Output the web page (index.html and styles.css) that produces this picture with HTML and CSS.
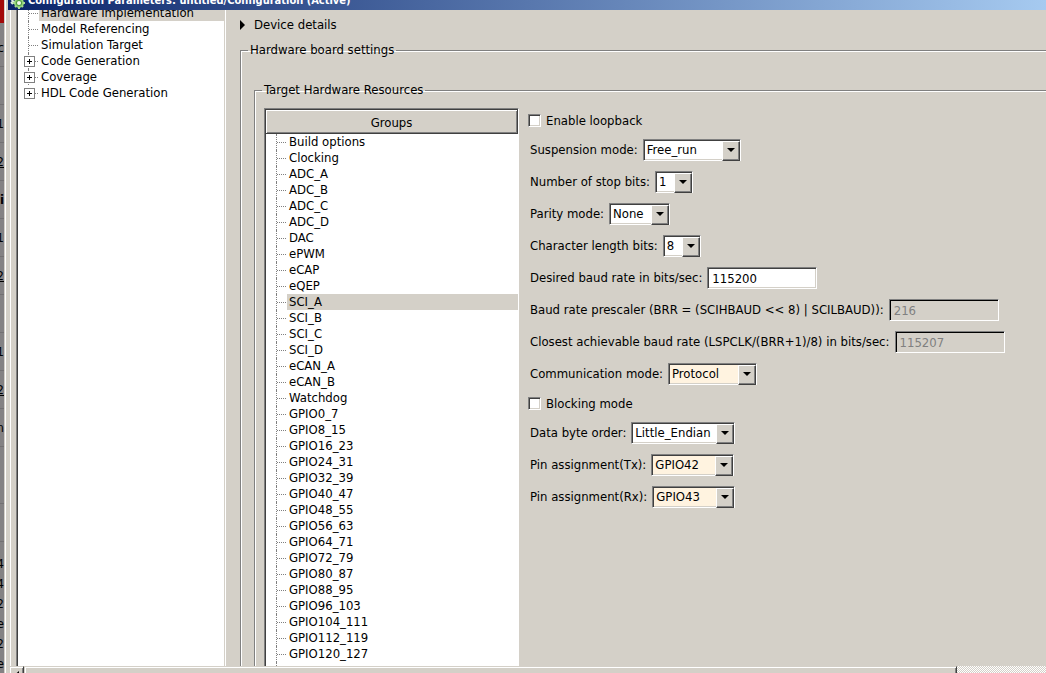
FILE: index.html
```html
<!DOCTYPE html>
<html lang="en">
<head>
    <meta charset="UTF-8">
    <meta name="viewport" content="width=device-width, initial-scale=1.0">
    <title>Configuration Parameters: untitled/Configuration (Active)</title>
    <link rel="stylesheet" href="styles.css">
</head>
<body>
    <!-- Sliver of the window behind the dialog -->
    <div class="behind">
        <div class="behind-red"></div>
        <div class="behind-row">c</div>
        <div class="behind-row"></div>
        <div class="behind-row">1</div>
        <div class="behind-row link">2</div>
        <div class="behind-row bold">i</div>
        <div class="behind-row">1</div>
        <div class="behind-row link">2</div>
        <div class="behind-row"></div>
        <div class="behind-row">1</div>
        <div class="behind-row link">2</div>
        <div class="behind-row">n</div>
        <div class="behind-row tall"></div>
        <div class="behind-row"></div>
        <div class="behind-lines">
            <span>4</span>
            <span>4</span>
            <span>2</span>
            <span>e</span>
            <span>2</span>
            <span>e</span>
        </div>
    </div>

    <div class="window">
        <header class="titlebar">
            <svg class="app-icon" width="16" height="16" viewBox="0 0 16 16">
                <circle cx="5" cy="6" r="3" fill="none" stroke="#dfeedd" stroke-width="2"/>
                <path d="M1 9l2 2M2 5l-2 1" stroke="#dfeedd" stroke-width="2"/>
                <circle cx="9" cy="10" r="4" fill="#4f9a3f" stroke="#8fcf76" stroke-width="2"/>
                <path d="M9 4v2M9 14v2M3 10h2M13 10h2M5 6l1 1M12 13l1 1M13 6l-1 1M5 14l1-1" stroke="#a9dc92" stroke-width="2"/>
                <circle cx="9" cy="10" r="2" fill="#f2f9ee"/>
            </svg>
            <span>Configuration Parameters: untitled/Configuration (Active)</span>
        </header>

        <div class="content">
            <nav class="sidebar">
                <ul class="tree">
                    <li class="selected"><span>Hardware Implementation</span></li>
                    <li><span>Model Referencing</span></li>
                    <li><span>Simulation Target</span></li>
                    <li class="parent"><span>Code Generation</span></li>
                    <li class="parent"><span>Coverage</span></li>
                    <li class="parent last"><span>HDL Code Generation</span></li>
                </ul>
            </nav>

            <main class="settings">
                <button class="disclosure" type="button">
                    <svg width="5" height="10" viewBox="0 0 5 10"><path d="M0 0l5 5-5 5z"/></svg>
                    Device details
                </button>

                <fieldset class="board">
                    <legend>Hardware board settings</legend>
                    <fieldset class="resources">
                        <legend>Target Hardware Resources</legend>

                        <div class="groups">
                            <div class="groups-header">Groups</div>
                            <ul class="tree">
                                <li><span>Build options</span></li>
                                <li><span>Clocking</span></li>
                                <li><span>ADC_A</span></li>
                                <li><span>ADC_B</span></li>
                                <li><span>ADC_C</span></li>
                                <li><span>ADC_D</span></li>
                                <li><span>DAC</span></li>
                                <li><span>ePWM</span></li>
                                <li><span>eCAP</span></li>
                                <li><span>eQEP</span></li>
                                <li class="selected"><span>SCI_A</span></li>
                                <li><span>SCI_B</span></li>
                                <li><span>SCI_C</span></li>
                                <li><span>SCI_D</span></li>
                                <li><span>eCAN_A</span></li>
                                <li><span>eCAN_B</span></li>
                                <li><span>Watchdog</span></li>
                                <li><span>GPIO0_7</span></li>
                                <li><span>GPIO8_15</span></li>
                                <li><span>GPIO16_23</span></li>
                                <li><span>GPIO24_31</span></li>
                                <li><span>GPIO32_39</span></li>
                                <li><span>GPIO40_47</span></li>
                                <li><span>GPIO48_55</span></li>
                                <li><span>GPIO56_63</span></li>
                                <li><span>GPIO64_71</span></li>
                                <li><span>GPIO72_79</span></li>
                                <li><span>GPIO80_87</span></li>
                                <li><span>GPIO88_95</span></li>
                                <li><span>GPIO96_103</span></li>
                                <li><span>GPIO104_111</span></li>
                                <li><span>GPIO112_119</span></li>
                                <li><span>GPIO120_127</span></li>
                            </ul>
                            <div class="tree-rest"></div>
                        </div>

                        <form class="params">
                            <div class="check">
                                <input type="checkbox" id="loopback">
                                <label for="loopback">Enable loopback</label>
                            </div>
                            <div class="field">
                                <label for="suspension">Suspension mode:</label>
                                <div class="combo w-98"><select id="suspension"><option>Free_run</option></select></div>
                            </div>
                            <div class="field">
                                <label for="stop-bits">Number of stop bits:</label>
                                <div class="combo w-38"><select id="stop-bits"><option>1</option><option>2</option></select></div>
                            </div>
                            <div class="field">
                                <label for="parity">Parity mode:</label>
                                <div class="combo w-61"><select id="parity"><option>None</option></select></div>
                            </div>
                            <div class="field">
                                <label for="char-length">Character length bits:</label>
                                <div class="combo w-38"><select id="char-length"><option>8</option></select></div>
                            </div>
                            <div class="field">
                                <label for="baud">Desired baud rate in bits/sec:</label>
                                <input type="text" id="baud" value="115200">
                            </div>
                            <div class="field">
                                <label for="prescaler">Baud rate prescaler (BRR = (SCIHBAUD &lt;&lt; 8) | SCILBAUD)):</label>
                                <input type="text" id="prescaler" value="216" disabled>
                            </div>
                            <div class="field">
                                <label for="closest">Closest achievable baud rate (LSPCLK/(BRR+1)/8) in bits/sec:</label>
                                <input type="text" id="closest" value="115207" disabled>
                            </div>
                            <div class="field">
                                <label for="comm-mode">Communication mode:</label>
                                <div class="combo changed w-89"><select id="comm-mode"><option>Protocol</option></select></div>
                            </div>
                            <div class="check">
                                <input type="checkbox" id="blocking">
                                <label for="blocking">Blocking mode</label>
                            </div>
                            <div class="field">
                                <label for="byte-order">Data byte order:</label>
                                <div class="combo w-104"><select id="byte-order"><option>Little_Endian</option></select></div>
                            </div>
                            <div class="field">
                                <label for="pin-tx">Pin assignment(Tx):</label>
                                <div class="combo changed w-83"><select id="pin-tx"><option>GPIO42</option></select></div>
                            </div>
                            <div class="field">
                                <label for="pin-rx">Pin assignment(Rx):</label>
                                <div class="combo changed w-83"><select id="pin-rx"><option>GPIO43</option></select></div>
                            </div>
                        </form>
                    </fieldset>
                </fieldset>
            </main>
        </div>

        <div class="scrollbar">
            <button class="scroll-left" type="button" aria-label="Scroll left">
                <svg width="4" height="7" viewBox="0 0 4 7"><path d="M4 0v7L0 3.5z"/></svg>
            </button>
            <div class="thumb"></div>
        </div>
    </div>
</body>
</html>
```
FILE: styles.css
```css
* {
    box-sizing: border-box;
}
body {
    display: flex;
    height: 100vh;
    margin: 0;
    overflow: hidden;
    background-color: #d4d0c8;
    color: #000;
    font: 13px/16px "DejaVu Sans Condensed", Tahoma, sans-serif;
}
button, input, select {
    font: inherit;
    color: inherit;
}
ul {
    list-style: none;
    margin: 0;
    padding: 0;
}

/* Window behind */
.behind {
    flex: none;
    width: 4px;
    overflow: hidden;
    background-color: #848284;
}
.behind-red {
    height: 23px;
    margin-bottom: 6px;
    background-color: #a30a0a;
}
.behind-row {
    display: flex;
    align-items: center;
    justify-content: flex-end;
    height: 38px;
    border-bottom: 1px solid #737173;
}
.behind-row.link {
    text-decoration: underline;
}
.behind-row.bold {
    font-weight: bold;
}
.behind-row.tall {
    height: 57px;
}
.behind-lines {
    display: flex;
    flex-direction: column;
    align-items: flex-end;
    padding-top: 12px;
    line-height: 20px;
}

/* Dialog */
.window {
    flex: 1;
    display: flex;
    flex-direction: column;
    min-width: 0;
    padding-left: 4px;
    box-shadow: inset 1px 0 #d4d0c8, inset 2px 0 #fff;
}
.titlebar {
    flex: none;
    display: flex;
    align-items: center;
    gap: 2px;
    height: 18px;
    margin-top: -8px;
    padding-left: 2px;
    background: linear-gradient(to right, #0a246a, #a6caf0);
    color: #fff;
    font-size: 11px;
    font-weight: bold;
    white-space: nowrap;
}
.content {
    flex: 1;
    display: flex;
    min-height: 0;
    margin-left: 2px;
    padding-left: 5px;
    border-left: 1px solid #fff;
    overflow: hidden;
}
.sidebar {
    flex: none;
    width: 210px;
    overflow: hidden;
    background-color: #fff;
    border-left: 1px solid #808080;
    border-right: 1px solid #fff;
    box-shadow: inset 1px 0 #404040, inset -1px 0 #d4d0c8;
}
.sidebar .tree {
    margin: -5px 1px 0;
    padding-left: 10px;
}

/* Trees */
.tree li {
    position: relative;
    height: 16px;
    padding-left: 10px;
    border-left: 1px dotted #808080;
    white-space: nowrap;
}
.tree li::before {
    content: "";
    position: absolute;
    top: 8px;
    left: 0;
    width: 9px;
    border-top: 1px dotted #808080;
}
.tree span {
    display: block;
    padding-left: 2px;
}
.tree .selected span {
    background-color: #d4d0c8;
}
.tree .last {
    border-left-color: transparent;
}
/* Plus box on collapsed branches */
.tree .parent::after {
    content: "";
    position: absolute;
    top: 3px;
    left: -5px;
    width: 9px;
    height: 9px;
    border: 1px solid #808080;
    background:
        linear-gradient(#000, #000) center / 5px 1px no-repeat,
        linear-gradient(#000, #000) center / 1px 5px no-repeat,
        #fff;
}

/* Settings pane */
.settings {
    flex: 1;
    display: flex;
    flex-direction: column;
    min-width: 0;
    padding: 7px 0 0 14px;
    white-space: nowrap;
}
.disclosure {
    display: flex;
    align-items: center;
    gap: 9px;
    height: 18px;
    padding: 0;
    border: none;
    background: none;
}
fieldset {
    min-width: 0;
    margin: 0;
    border: solid #808080;
    border-width: 1px 0 0 1px;
    box-shadow: inset 1px 1px #fff;
}
legend {
    padding: 0 2px;
}
.board {
    margin-top: 9px;
    padding: 24px 0 0 13px;
}
.board > legend {
    margin-left: -6px;
}
.resources {
    display: flex;
    gap: 9px;
    padding: 10px 0 0 9px;
}
.resources > legend {
    margin-left: -2px;
}
.groups {
    flex: none;
    width: 255px;
    border: 1px solid #808080;
    border-right-color: #fff;
    background-color: #fff;
}
.groups-header {
    height: 25px;
    border: 1px solid #404040;
    box-shadow: inset 1px 1px #fff, inset -1px -1px #808080;
    background-color: #d4d0c8;
    line-height: 26px;
    text-align: center;
}
.groups .tree, .tree-rest {
    border-left: 1px solid #404040;
    padding-left: 10px;
}
.tree-rest {
    height: 40px;
}
.tree-rest::before {
    content: "";
    display: block;
    height: 100%;
    border-left: 1px dotted #808080;
}

/* Parameters */
.params {
    display: flex;
    flex-direction: column;
    gap: 10px;
    padding-top: 4px;
}
.field {
    display: flex;
    align-items: center;
    gap: 5px;
    height: 22px;
    padding-left: 2px;
}
.check {
    display: flex;
    align-items: center;
    gap: 5px;
    height: 17px;
}
.check input {
    appearance: none;
    width: 13px;
    height: 13px;
    margin: 0;
    background-color: #fff;
    border: 1px solid;
    border-color: #808080 #fff #fff #808080;
    box-shadow: inset 1px 1px #404040, inset -1px -1px #d4d0c8;
}
.field input, .combo {
    height: 22px;
    background-color: #fff;
    border: 1px solid;
    border-color: #808080 #fff #fff #808080;
    box-shadow: inset 1px 1px #404040, inset -1px -1px #d4d0c8;
}
.field input {
    width: 110px;
    padding: 0 4px;
}
.field input:disabled {
    background-color: #d4d0c8;
    color: #808080;
    box-shadow: inset 1px 1px #000;
}
.combo {
    position: relative;
    padding: 1px;
}
.combo.changed {
    background-color: #fff3e0;
}
.combo select {
    appearance: none;
    display: block;
    width: 100%;
    height: 18px;
    padding: 0 0 0 2px;
    border: none;
    background: none;
}
/* Drop-down button */
.combo::before {
    content: "";
    position: absolute;
    top: 1px;
    right: 0;
    width: 16px;
    height: 18px;
    background-color: #d4d0c8;
    border: 1px solid;
    border-color: #fff #404040 #404040 #fff;
    box-shadow: inset -1px -1px #808080;
    pointer-events: none;
}
.combo::after {
    content: "";
    position: absolute;
    top: 8px;
    right: 5px;
    border: 4px solid transparent;
    border-top-color: #000;
    border-bottom: none;
    pointer-events: none;
}
.w-38 { width: 38px; }
.w-61 { width: 61px; }
.w-83 { width: 83px; }
.w-89 { width: 89px; }
.w-98 { width: 98px; }
.w-104 { width: 104px; }

/* Horizontal scroll bar */
.scrollbar {
    flex: none;
    display: flex;
    height: 7px;
    margin-left: 1px;
    overflow: hidden;
    background: repeating-conic-gradient(#fff 0 25%, #d4d0c8 0 50%) 0 0 / 2px 2px;
}
.scroll-left, .thumb {
    height: 17px;
    background-color: #d4d0c8;
    border: 1px solid;
    border-color: #d4d0c8 #404040 #404040 #d4d0c8;
    box-shadow: inset 1px 1px #fff, inset -1px -1px #808080;
}
.scroll-left {
    flex: none;
    display: flex;
    align-items: center;
    justify-content: center;
    width: 15px;
    padding: 0;
}
.thumb {
    width: 90%;
}
```
